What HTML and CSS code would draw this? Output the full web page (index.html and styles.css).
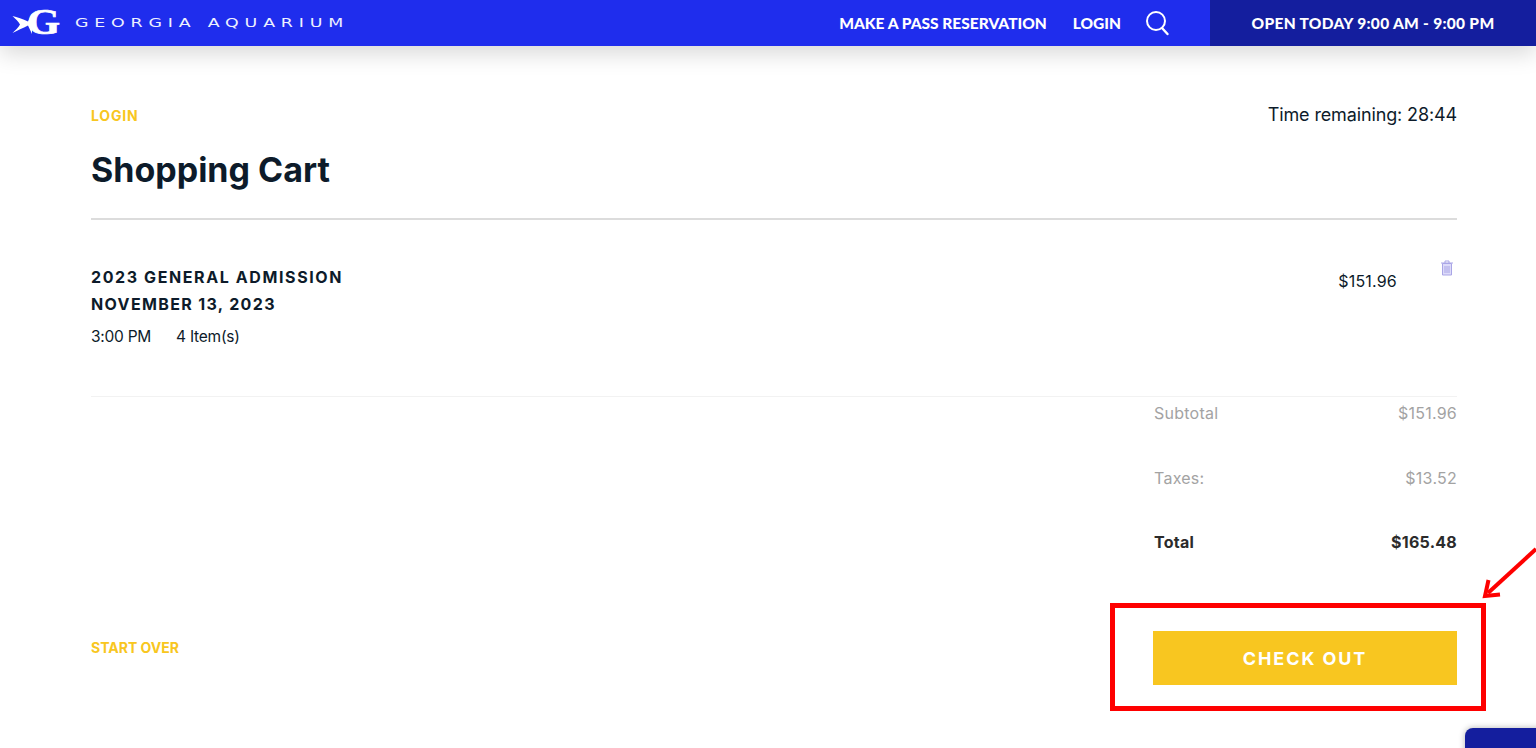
FILE: index.html
```html
<!DOCTYPE html>
<html lang="en">
<head>
  <meta charset="UTF-8" />
  <title>Shopping Cart - Georgia Aquarium</title>
  <link rel="stylesheet" href="styles.css">
</head>
<body>

  <!-- Top bar -->
  <header class="topbar">
    <a class="logo" href="#">
      <svg class="logo-mark" width="48" height="26" viewBox="0 0 48 26">
        <path d="M0.5 6 C5 7 11 9 16 11.5 L20 4 L20 24 L16 15.5 C11 18 5 20.5 0.5 23 C3 20.5 6.5 17.5 8 14.5 C6.5 11.5 3 8.5 0.5 6 Z" fill="#fff"/>
        <text class="logo-g" transform="translate(15 24) scale(1.18 1)">G</text>
      </svg>
      <span class="logo-text">GEORGIA AQUARIUM</span>
    </a>
    <nav class="topnav">
      <a href="#">MAKE A PASS RESERVATION</a>
      <a href="#">LOGIN</a>
      <svg class="search-icon" width="26" height="26" viewBox="0 0 26 26" fill="none" stroke="#fff">
        <circle cx="12" cy="11" r="9" stroke-width="2"/>
        <path d="M18 18 L23.5 24" stroke-width="2.4" stroke-linecap="round"/>
      </svg>
    </nav>
    <div class="hours">OPEN TODAY 9:00 AM - 9:00 PM</div>
  </header>

  <main class="cart">
    <div class="cart-top">
      <a class="link-yellow login-link" href="#">LOGIN</a>
      <span class="timer">Time remaining: 28:44</span>
    </div>
    <h1>Shopping Cart</h1>

    <section class="item">
      <div class="item-info">
        <h2>2023 GENERAL ADMISSION</h2>
        <h2 class="item-date">NOVEMBER 13, 2023</h2>
        <p class="item-meta"><span>3:00 PM</span><span>4 Item(s)</span></p>
      </div>
      <div class="item-price">$151.96</div>
      <svg class="trash" width="14" height="16" viewBox="0 0 14 16" fill="#dddbf9" stroke="#a9a5e6" stroke-width="1">
        <path d="M1 3 H13 M5 3 V1 H9 V3" fill="none"/>
        <path d="M2.5 3.5 H11.5 V15 H2.5 Z"/>
        <path d="M5 6 V13 M7 6 V13 M9 6 V13" fill="none"/>
      </svg>
    </section>

    <section class="totals">
      <div class="total-row"><span>Subtotal</span><span>$151.96</span></div>
      <div class="total-row"><span>Taxes:</span><span>$13.52</span></div>
      <div class="total-row grand"><span>Total</span><span>$165.48</span></div>
    </section>

    <div class="cart-actions">
      <a class="link-yellow" href="#">START OVER</a>
      <button class="checkout">CHECK OUT</button>
    </div>
  </main>

  <!-- Red markup drawn over the page -->
  <div class="markup-box"></div>
  <svg class="markup-arrow" width="56" height="52" viewBox="0 0 56 52" fill="none" stroke="#fe0000" stroke-width="4">
    <path d="M54 2 L6 46"/>
    <path d="M6.5 33 L3 49 L18 47.5" stroke-width="4"/>
  </svg>

  <div class="chat-tab"></div>

</body>
</html>
```

FILE: styles.css
```css
html, body {
  height: 100%;
  overflow: hidden;
}

body {
  font-family: 'Inter', sans-serif;
  background-color: #fff;
  color: #0d1b2a;
  margin: 0;
}

a {
  text-decoration: none;
  color: inherit;
}

.topbar {
  display: flex;
  align-items: stretch;
  height: 46px;
  background-color: #1f2ded;
  color: white;
  box-shadow: 0 8px 22px rgba(0,0,0,0.15);
}

.logo {
  display: flex;
  align-items: center;
  padding-left: 12px;
  gap: 15px;
}

.logo-mark {
  overflow: visible;
}

.logo-g {
  font-family: 'Liberation Serif', serif;
  font-weight: bold;
  font-size: 36px;
  fill: #fff;
  stroke: #fff;
  stroke-width: 0.7px;
}

.logo-text {
  display: inline-block;
  font-family: 'DejaVu Sans', sans-serif;
  font-size: 12px;
  letter-spacing: 4px;
  color: #eef0ff;
  transform: scaleX(1.45);
  transform-origin: left center;
  margin-top: -1px;
}

.topnav {
  display: flex;
  align-items: center;
  gap: 26px;
  margin-left: auto;
  padding-right: 40px;
  padding-bottom: 1px;
  font-family: 'Lato', sans-serif;
  font-weight: 900;
  font-size: 15.5px;
}

.search-icon {
  margin-left: -3px;
}

.hours {
  display: flex;
  align-items: center;
  justify-content: center;
  width: 326px;
  padding-bottom: 1px;
  box-sizing: border-box;
  background-color: #141e9e;
  font-family: 'Lato', sans-serif;
  font-weight: 900;
  font-size: 15.5px;
  letter-spacing: 0.3px;
}

.cart {
  padding: 0 79px 0 91px;
}

.cart-top {
  display: flex;
  justify-content: space-between;
  align-items: center;
  height: 21px;
  margin-top: 58px;
}

.link-yellow {
  color: #f8c620;
  font-weight: 700;
  font-size: 14px;
}

.login-link {
  letter-spacing: 0.8px;
  margin-top: 1px;
}

.timer {
  font-size: 18px;
  letter-spacing: -0.13px;
}

h1 {
  font-size: 34px;
  font-weight: 700;
  margin: 25px 0 28px;
  line-height: 40px;
}

.item {
  display: flex;
  align-items: flex-start;
  border-top: 2px solid #dcdcdc;
  border-bottom: 1px solid #f2f2f2;
  height: 179px;
  box-sizing: border-box;
  padding-top: 44px;
}

.item h2 {
  font-size: 16px;
  font-weight: 700;
  letter-spacing: 1.6px;
  line-height: 27px;
  margin: 0;
}

.item .item-date {
  letter-spacing: 1.35px;
}

.item-meta {
  display: flex;
  gap: 25px;
  margin: 9px 0 0;
  font-size: 15.5px;
  line-height: 20px;
  letter-spacing: -0.25px;
}

.item-price {
  margin-left: auto;
  margin-top: 7px;
  font-size: 16px;
  line-height: 20px;
  letter-spacing: 0.2px;
}

.trash {
  margin-left: 43px;
  margin-right: 3px;
  margin-top: -4px;
}

.totals {
  margin-left: auto;
  width: 303px;
  margin-top: 6px;
}

.total-row {
  display: flex;
  justify-content: space-between;
  height: 64.5px;
  line-height: 21px;
  font-size: 16px;
  letter-spacing: 0.25px;
  color: #a3a3a3;
}

.total-row.grand {
  color: #2b2b2b;
  font-weight: 700;
  height: auto;
}

.cart-actions {
  display: flex;
  justify-content: space-between;
  align-items: flex-start;
  margin-top: 78px;
}

.cart-actions .link-yellow {
  margin-top: 8px;
}

.checkout {
  width: 304px;
  height: 54px;
  background-color: #f8c620;
  color: white;
  border: none;
  font-family: 'Inter', sans-serif;
  font-weight: 700;
  font-size: 18px;
  letter-spacing: 1.9px;
  cursor: pointer;
}

.markup-box {
  position: absolute;
  left: 1110px;
  top: 603px;
  width: 376px;
  height: 108px;
  box-sizing: border-box;
  border: 5px solid #fe0000;
}

.markup-arrow {
  position: absolute;
  left: 1482px;
  top: 547px;
}

.chat-tab {
  position: absolute;
  left: 1465px;
  top: 728px;
  width: 80px;
  height: 30px;
  background-color: #141e9e;
  border-radius: 8px 0 0 0;
  box-shadow: 0 0 6px rgba(0,0,0,0.3);
}
```
